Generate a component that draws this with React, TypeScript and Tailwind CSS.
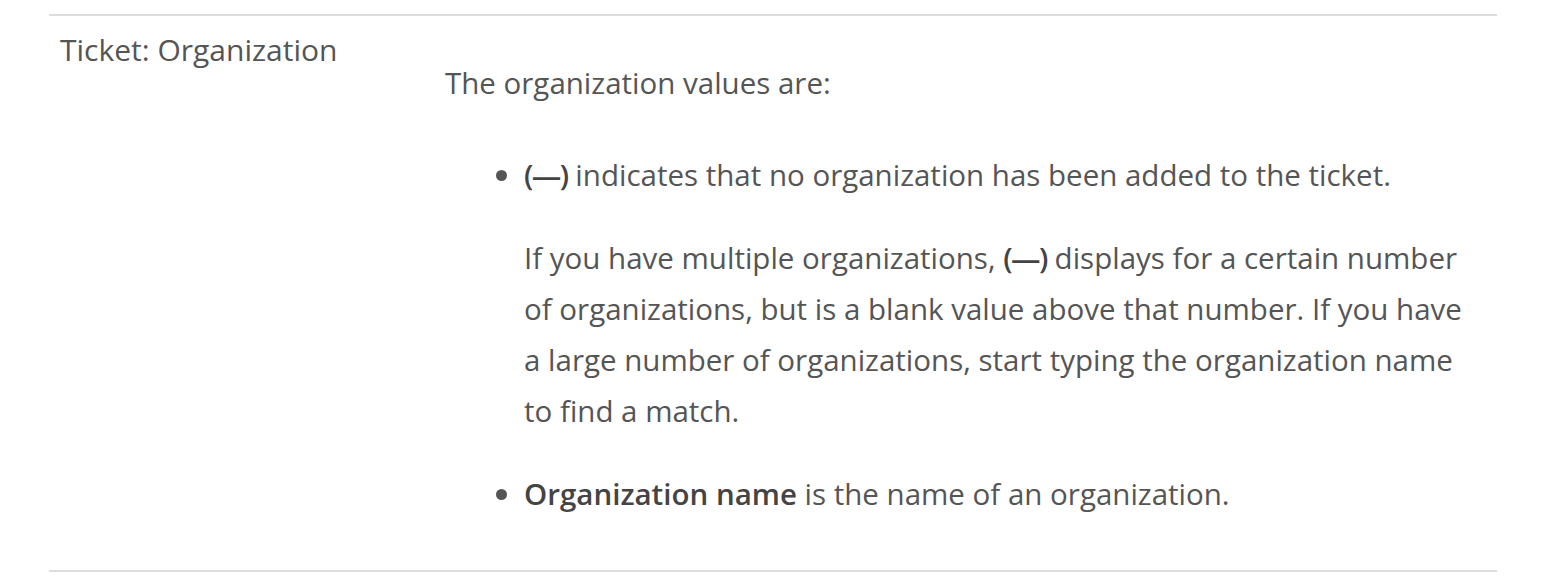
import React from "react";

export default function App() {
  return (
    <div
      className="w-[1562px] h-[582px] bg-white text-[#555555] pt-[14px] pl-[49px]"
      style={{ fontFamily: "'Open Sans', Lato, sans-serif" }}
    >
      <div className="w-[1448px] flex border-t-2 border-b-2 border-[#dddddd]">
        <div className="w-[385px] shrink-0 pl-[11px] pt-[8px] text-[30px] leading-[51px]">
          Ticket: Organization
        </div>
        <div className="flex-1 pl-[11px] pr-[18px] pt-[41px] pb-[51px] text-[29.5px] leading-[51px]">
          <p>The organization values are:</p>
          <ul className="list-disc pl-[79px] mt-[41px]">
            <li>
              <p>
                <strong className="font-semibold text-[#444] tracking-[-1.5px]">(—)</strong> indicates that no
                organization has been added to the ticket.
              </p>
              <p className="mt-[32px]">
                If you have multiple organizations,{" "}
                <strong className="font-semibold text-[#444] tracking-[-1.5px]">(—)</strong> displays for a
                certain number of organizations, but is a blank value above that number. If you have a large
                number of organizations, start typing the organization name to find a match.
              </p>
            </li>
            <li className="mt-[32px]">
              <p>
                <strong className="font-semibold text-[#444]">Organization name</strong> is the name of an
                organization.
              </p>
            </li>
          </ul>
        </div>
      </div>
    </div>
  );
}
